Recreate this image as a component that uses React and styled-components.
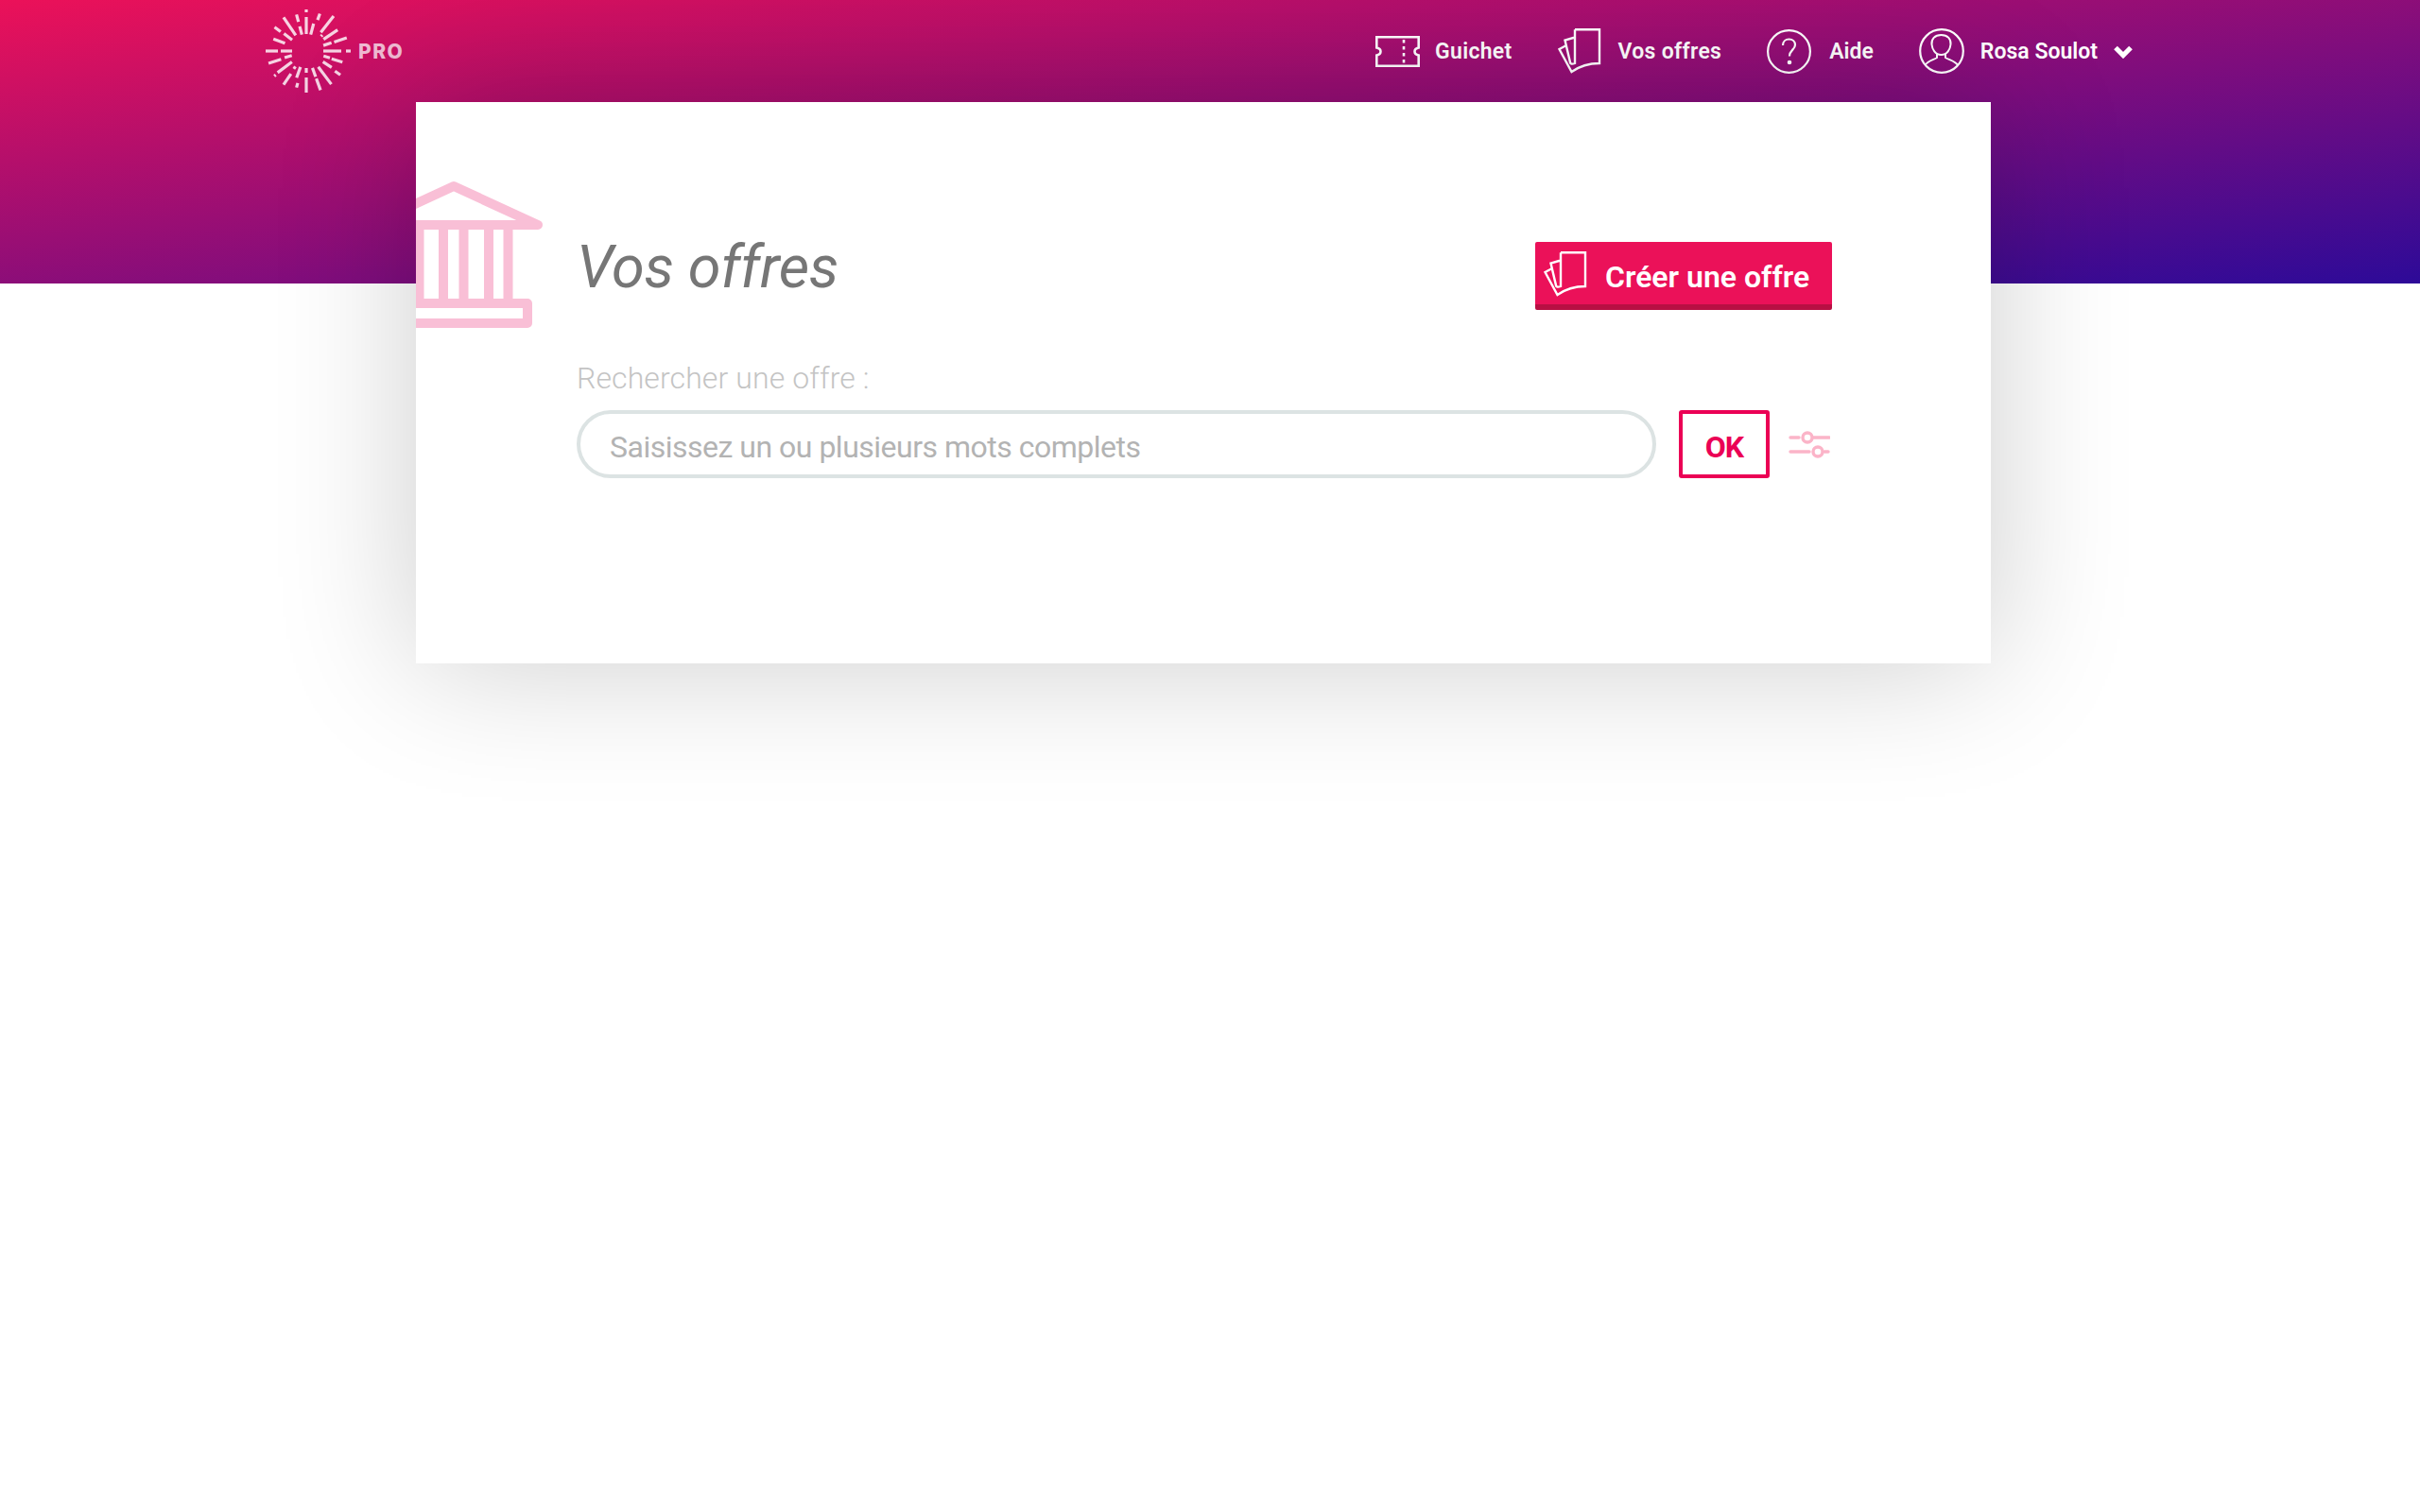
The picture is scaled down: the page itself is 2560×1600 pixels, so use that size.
import React from "react";
import styled, { createGlobalStyle } from "styled-components";

const GlobalStyle = createGlobalStyle`
  html, body { margin: 0; padding: 0; background: #fff; }
  body { font-family: Roboto, "Liberation Sans", sans-serif; min-height: 1600px; overflow-x: hidden; }
`;

const RAYS = [
  [0, 18, 36], [0, 41, 44], [-15, 18, 27], [-15, 32, 40], [-34, 20, 43], [15, 18, 30], [20, 35, 42],
  [38, 25, 47], [45, 22, 24], [56, 22, 40], [-53, 34, 42], [-52, 19, 30], [-70, 24, 37], [-90, 30, 43],
  [-90, 15, 27], [72, 31, 45], [72, 19, 28], [90, 18, 37], [90, 42, 47], [106, 19, 26], [107, 28, 40],
  [123, 21, 32], [125, 37, 44], [143, 21, 44], [160, 19, 29], [160, 31, 44], [180, 18, 23], [180, 28, 44],
  [-160, 18, 30], [-165, 35, 40], [-145, 20, 23], [-146, 29, 43], [-127, 19, 38], [-128, 41, 43],
  [-107, 16, 24], [-108, 28, 42],
];

const Logo = () => (
  <svg width="96" height="96" viewBox="-48 -48 96 96" fill="none" stroke="#fff" strokeWidth="3.2" strokeOpacity=".82">
    {RAYS.map(([angle, from, to], i) => (
      <line key={i} x1="0" x2="0" y1={-from} y2={-to} transform={`rotate(${angle})`} />
    ))}
  </svg>
);

const TicketIcon = () => (
  <svg width="47" height="33" viewBox="0 0 47 33" fill="none" stroke="#fff" strokeWidth="2.6">
    <path d="M1.3 1.3H45.7V12.5C43 13 41.5 14.5 41.5 16.5C41.5 18.5 43 20 45.7 20.5V31.7H1.3V20.5C4 20 5.5 18.5 5.5 16.5C5.5 14.5 4 13 1.3 12.5Z" />
    <path d="M30 4V29" strokeDasharray="3.5 3.5" />
  </svg>
);

const CardsIcon = () => (
  <svg width="46" height="48" viewBox="0 0 46 48" fill="none" stroke="#fff" strokeWidth="2.4">
    <path d="M18 1.2H44V37C33 37 23 40 14.5 46L1.5 22L9 18" />
    <path d="M18 1.2V37C14 38.5 13 37 13 36L7.5 12.5L18 9.5" />
  </svg>
);

const HelpIcon = () => (
  <svg width="47" height="47" viewBox="0 0 47 47" fill="none" stroke="#fff" strokeWidth="2.2">
    <circle cx="23.5" cy="23.5" r="22.4" />
    <path d="M17 17C17 13 20 10.5 23.5 10.5C27.5 10.5 30 13.2 30 16.5C30 21.5 24 22 24 28.5" />
    <circle cx="24" cy="35" r="2.3" fill="#fff" stroke="none" />
  </svg>
);

const ProfileIcon = () => (
  <svg width="48" height="48" viewBox="0 0 48 48" fill="none" stroke="#fff" strokeWidth="2">
    <circle cx="24" cy="24" r="22.8" strokeWidth="2.2" />
    <path d="M23.5 7C16.5 7 13 11.5 13.5 17C14 22 17 28 23.5 28C30 28 33 22 33.5 17C34 11.5 30.5 7 23.5 7Z" />
    <path d="M19 27V31C15 33.5 9 34.5 6.5 39M28 27V31C32 33.5 38 34.5 41 39" />
  </svg>
);

const ChevronIcon = () => (
  <svg width="20" height="15" viewBox="0 0 20 15" fill="none" stroke="#fff" strokeWidth="5.2">
    <path d="M2 3.5L10 11.5L18 3.5" />
  </svg>
);

const BankIcon = () => (
  <svg width="190" height="160" viewBox="0 0 190 160" fill="none" stroke="#f9bfd6" strokeWidth="10" strokeLinejoin="round" strokeLinecap="round">
    <path d="M5 47H183L94 6Z" />
    <path d="M36.5 47V130M57.5 47V130M83 47V130M104.5 47V130M131 47V130M151.5 47V130" strokeLinecap="butt" />
    <path d="M16 130H172V151H16Z" />
  </svg>
);

const FilterIcon = () => (
  <svg width="44" height="30" viewBox="0 0 44 30" fill="none" stroke="#fbb4c8" strokeWidth="3.4" strokeLinecap="round">
    <path d="M2 8H11M26 8H43M2 23H22M38 23H42" />
    <circle cx="20" cy="8" r="5" />
    <circle cx="31" cy="23" r="5" />
  </svg>
);

const Page = styled.div`
  width: 2560px;
`;

const Hero = styled.header`
  height: 300px;
  background: linear-gradient(to bottom right, #eb1159, #2d0a98);
`;

const Nav = styled.nav`
  height: 108px;
  display: flex;
  align-items: center;
  padding: 0 304px 0 276px;
`;

const Brand = styled.div`
  display: flex;
  align-items: center;
  gap: 7px;
  margin-right: auto;
`;

const BrandTag = styled.span`
  font-family: Inter, sans-serif;
  font-weight: 800;
  font-size: 21px;
  letter-spacing: 1.5px;
  color: rgba(255, 255, 255, 0.72);
`;

const NavItem = styled.a`
  display: flex;
  align-items: center;
  gap: ${(p) => p.$gap}px;
  margin-left: 48px;
  color: #fff;
  font-size: 23px;
  font-weight: 600;
  letter-spacing: ${(p) => p.$tracking || 0}px;
  text-decoration: none;
  white-space: nowrap;
`;

const Main = styled.main`
  margin: -192px 0 0 440px;
  width: 1666px;
  height: 594px;
  background: #fff;
  box-shadow: 0 0 140px rgba(0, 0, 0, 0.2);
  display: flex;
  position: relative;
`;

const Emblem = styled.div`
  width: 170px;
  overflow: hidden;
  padding-top: 83px;
  flex: none;

  svg {
    display: block;
    margin-left: -54px;
  }
`;

const Content = styled.div`
  width: 1328px;
  padding-top: 136px;
`;

const TitleRow = styled.div`
  display: flex;
  justify-content: space-between;
  align-items: flex-start;
`;

const Title = styled.h1`
  margin: 2px 0 0;
  font-size: 63px;
  line-height: 74px;
  font-weight: 400;
  font-style: italic;
  letter-spacing: -0.4px;
  color: #767676;
`;

const CreateButton = styled.a`
  width: 314px;
  height: 72px;
  box-sizing: border-box;
  margin-top: 12px;
  padding: 7px 0 0 9px;
  display: flex;
  align-items: center;
  gap: 19px;
  background: #eb1159;
  border-bottom: 6px solid #b80f43;
  border-radius: 2px;
  color: #fff;
  font-size: 32px;
  font-weight: 600;
  white-space: nowrap;

  svg {
    margin-top: -5px;
  }
`;

const SearchLabel = styled.label`
  display: block;
  margin-top: 50px;
  font-size: 32px;
  line-height: 44px;
  font-weight: 300;
  letter-spacing: 0.1px;
  color: #c4c4c4;
`;

const SearchRow = styled.div`
  margin-top: 12px;
  display: flex;
  align-items: center;
`;

const SearchBox = styled.div`
  width: 1142px;
  height: 72px;
  box-sizing: border-box;
  border: 4px solid #dce3e3;
  border-radius: 36px;
  padding: 5px 31px 0;
  display: flex;
  align-items: center;
  font-size: 32px;
  letter-spacing: -0.5px;
  color: #b3b3b3;
`;

const OkButton = styled.button`
  width: 96px;
  height: 72px;
  margin-left: 24px;
  padding: 5px 0 0;
  box-sizing: border-box;
  border: 4px solid #eb0055;
  border-radius: 3px;
  background: #fff;
  color: #eb0055;
  font-family: inherit;
  font-size: 32px;
  font-weight: 700;
  letter-spacing: -1px;
`;

const FilterToggle = styled.span`
  display: flex;
  margin-left: 20px;
`;

export default function App() {
  return (
    <Page>
      <GlobalStyle />
      <Hero>
        <Nav>
          <Brand>
            <Logo />
            <BrandTag>PRO</BrandTag>
          </Brand>
          <NavItem $gap={16} $tracking={0.3}><TicketIcon />Guichet</NavItem>
          <NavItem $gap={18} $tracking={0.3}><CardsIcon />Vos offres</NavItem>
          <NavItem $gap={19}><HelpIcon />Aide</NavItem>
          <NavItem $gap={17}>
            <ProfileIcon />
            Rosa Soulot
            <ChevronIcon />
          </NavItem>
        </Nav>
      </Hero>
      <Main>
        <Emblem>
          <BankIcon />
        </Emblem>
        <Content>
          <TitleRow>
            <Title>Vos offres</Title>
            <CreateButton>
              <CardsIcon />
              Créer une offre
            </CreateButton>
          </TitleRow>
          <SearchLabel>Rechercher une offre :</SearchLabel>
          <SearchRow>
            <SearchBox>Saisissez un ou plusieurs mots complets</SearchBox>
            <OkButton>OK</OkButton>
            <FilterToggle><FilterIcon /></FilterToggle>
          </SearchRow>
        </Content>
      </Main>
    </Page>
  );
}
